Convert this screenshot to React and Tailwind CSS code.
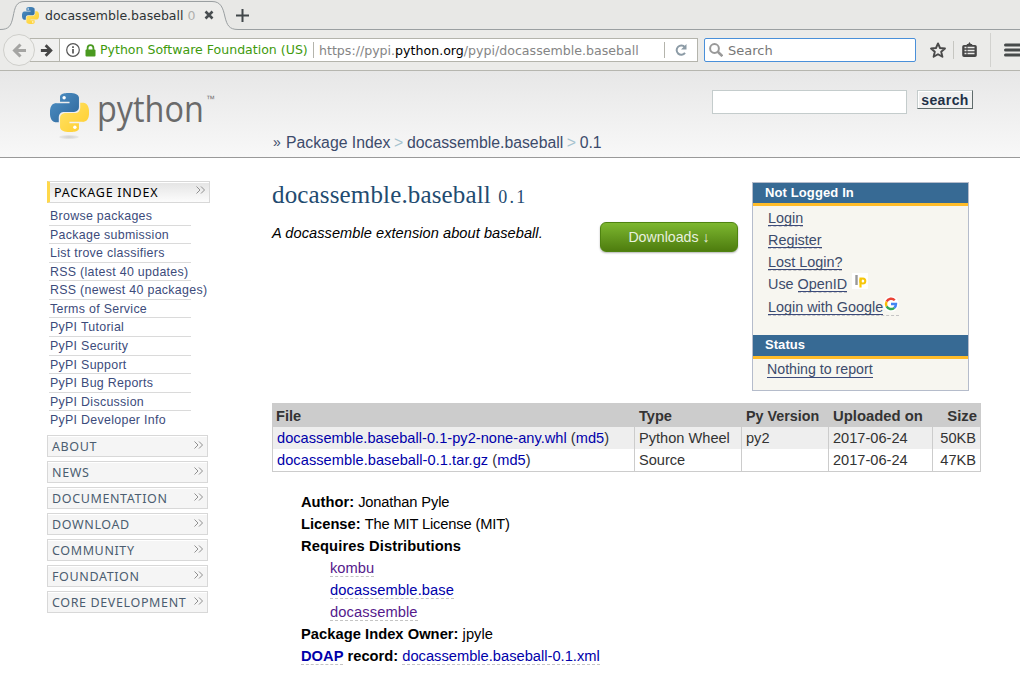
const LOBE =
  "M14.25.18l.9.2.73.26.59.3.45.32.34.34.25.34.16.33.1.3.04.26.02.2-.01.13V8.5l-.05.63-.13.55-.21.46-.26.38-.3.31-.33.25-.35.19-.35.14-.33.1-.3.07-.26.04-.21.02H8.77l-.69.05-.59.14-.5.22-.41.27-.33.32-.27.35-.2.36-.15.37-.1.35-.07.32-.04.27-.02.21v3.06H3.17l-.21-.03-.28-.07-.32-.12-.35-.18-.36-.26-.36-.36-.35-.46-.32-.59-.28-.73-.21-.88-.14-1.05-.05-1.23.06-1.22.16-1.04.24-.87.32-.71.36-.57.4-.44.42-.33.42-.24.4-.16.36-.1.32-.05.24-.01h.16l.06.01h8.16v-.83H6.18l-.01-2.75-.02-.37.05-.34.11-.31.17-.28.25-.26.31-.23.38-.2.44-.18.51-.15.58-.12.64-.1.71-.06.77-.04.84-.02 1.27.05z";

function PythonMark({ className, id }) {
  return (
    <svg className={className} viewBox="0 0 24 24">
      <defs>
        <linearGradient id={id + "b"} x1="0" y1="0" x2="1" y2="1">
          <stop offset="0" stopColor="#4f92c6" />
          <stop offset="1" stopColor="#2d659a" />
        </linearGradient>
        <linearGradient id={id + "y"} x1="0" y1="0" x2="1" y2="1">
          <stop offset="0" stopColor="#ffcd2c" />
          <stop offset="1" stopColor="#ffe368" />
        </linearGradient>
      </defs>
      <path d={LOBE} fill={`url(#${id}b)`} />
      <circle cx="8.7" cy="2.9" r="1.05" fill="#fff" />
      <g transform="rotate(180 12 12)">
        <path d={LOBE} fill={`url(#${id}y)`} />
        <circle cx="8.7" cy="2.9" r="1.05" fill="#fff" />
      </g>
    </svg>
  );
}

function TabBar() {
  return (
    <div className="relative h-[30px] shrink-0 bg-[#e8e8e6]">
      <svg className="absolute left-0 top-0" width="1020" height="30" fill="none">
        <path d="M0 29.5C9 29.5 11 26 13 17C15 7 16 1.5 25 1.5H212C221 1.5 223 8 225 17C227 25 229 29.5 238 29.5V30H0z" fill="#ececea" />
        <path d="M0 29.5C9 29.5 11 26 13 17C15 7 16 1.5 25 1.5H212C221 1.5 223 8 225 17C227 25 229 29.5 238 29.5H1020" stroke="#9a9fa1" />
      </svg>
      <div className="relative flex h-[30px] items-center pl-[22px]">
        <PythonMark id="t" className="h-[17px] w-[17px]" />
        <span className="ml-[6px] w-[154px] whitespace-nowrap pt-px font-['DejaVu_Sans'] text-[12.5px] leading-[18px] text-[#2e3436]">
          docassemble.baseball <span className="text-[#b0b0ae]">0</span>
        </span>
        <svg className="ml-[5px]" width="10" height="10" viewBox="0 0 10 10" stroke="#484d50" strokeWidth="2.6">
          <path d="M1.5 1.5l7 7M8.5 1.5l-7 7" />
        </svg>
        <svg className="ml-[22px]" width="13" height="13" viewBox="0 0 13 13" stroke="#41474a" strokeWidth="2">
          <path d="M6.5 0v13M0 6.5h13" />
        </svg>
      </div>
    </div>
  );
}

function Toolbar() {
  return (
    <div className="flex h-[41px] shrink-0 items-center border-b border-[#b6b6af] bg-[#ebebe9] font-['DejaVu_Sans'] text-[12.6px] leading-[18px]">
      <div className="relative z-10 ml-[3px] flex h-8 w-8 items-center justify-center rounded-full border border-[#cfcfcb] bg-[#efefed]">
        <svg width="15" height="15" viewBox="0 0 15 15" fill="none" stroke="#a5a5a3" strokeWidth="3">
          <path d="M14 7.5H3M8.5 1.5l-6 6 6 6" />
        </svg>
      </div>
      <div className="-ml-[5px] flex h-6 w-[668px] items-center border border-l-0 border-[#b4b4ac] bg-white">
        <div className="flex h-full w-[30px] items-center justify-center border-r border-[#b4b4ac] bg-[#f0f0ef]">
          <svg className="ml-1" width="13" height="13" viewBox="0 0 15 15" fill="none" stroke="#464646" strokeWidth="3.2">
            <path d="M1 7.5h11M6.5 1.5l6 6-6 6" />
          </svg>
        </div>
        <svg className="ml-[6px]" width="14" height="14" viewBox="0 0 14 14" fill="none" stroke="#555" strokeWidth="1.2">
          <circle cx="7" cy="7" r="6.3" />
          <path d="M7 6v4.5M7 3.2v1.7" strokeWidth="1.7" />
        </svg>
        <svg className="ml-[5px]" width="11" height="13" viewBox="0 0 11 13">
          <rect x="0.5" y="5.5" width="10" height="7" rx="1" fill="#4a9a20" />
          <path d="M2.6 6V4a2.9 2.9 0 0 1 5.8 0v2" fill="none" stroke="#4a9a20" strokeWidth="1.8" />
        </svg>
        <span className="ml-[4px] w-[208px] whitespace-nowrap text-[12.550px] text-[#409a0c]">Python Software Foundation (US)</span>
        <span className="ml-[5px] h-4 w-px bg-[#b4b4ac]" />
        <span className="ml-[5px] w-[345px] whitespace-nowrap pt-px text-[#858585]">
          https://pypi.<span className="text-black">python.org</span>/pypi/docassemble.baseball
        </span>
        <span className="h-4 w-px bg-[#b4b4ac]" />
        <svg className="ml-[10px]" width="12" height="12" viewBox="0 0 12 12" fill="none">
          <path d="M9.8 3.2A4.6 4.6 0 1 0 10 8.8" stroke="#8c9ba6" strokeWidth="2" />
          <path d="M11.5 0v5.5H6z" fill="#8c9ba6" />
        </svg>
      </div>
      <div className="ml-[6px] flex h-6 w-[212px] items-center rounded-[2px] border border-[#4a90d9] bg-white">
        <svg className="ml-[4px]" width="14" height="14" viewBox="0 0 14 14" fill="none" stroke="#999" strokeWidth="2">
          <circle cx="5.5" cy="5.5" r="4.4" />
          <path d="M8.8 8.8l4.6 4.4" strokeWidth="2.6" />
        </svg>
        <span className="ml-[5px] pt-px text-[13px] text-[#777]">Search</span>
      </div>
      <svg className="ml-[14px]" width="16" height="16" viewBox="0 0 16 16" fill="none" stroke="#4a4a4a" strokeWidth="1.9" strokeLinejoin="round">
        <path d="M8 1.4l2 4.6 5 .5-3.8 3.3 1.2 5L8 12.2l-4.4 2.6 1.2-5L1 6.5 6 6z" />
      </svg>
      <span className="ml-[7px] h-[18px] w-px bg-[#c6c6c1]" />
      <svg className="-mt-px ml-[8px]" width="15" height="15" viewBox="0 0 15 15">
        <path d="M5 2h1.2L7.5 0l1.3 2H10l.4 1H13a1.8 1.8 0 0 1 1.8 1.8v8.4A1.8 1.8 0 0 1 13 15H2a1.8 1.8 0 0 1-1.8-1.8V4.8A1.8 1.8 0 0 1 2 3h2.6z" fill="#464646" />
        <path d="M2.5 5.5h2M5.500 5.500h7M2.500 8.500h2M5.500 8.500h7M2.500 11.500h2M5.500 11.500h7" stroke="#ebebe9" strokeWidth="1.5" />
      </svg>
      <span className="ml-[13px] h-[34px] w-px bg-[#d2d2cf]" />
      <svg className="ml-[13px]" width="16" height="14" viewBox="0 0 16 14" stroke="#464a4a" strokeWidth="3" strokeLinecap="round">
        <path d="M1.500 2H18M1.500 7H18M1.500 12H18" />
      </svg>
    </div>
  );
}

function SiteHeader() {
  return (
    <header className="flex h-[87px] shrink-0 border-b border-[#999] bg-linear-to-b from-[#e7e7e7] to-[#f8f8f8]">
      <div className="w-[272px] pl-[50px] pt-[22px]">
        <div className="flex h-[40px]">
          <PythonMark id="l" className="h-[39px] w-[39px] shrink-0" />
          <span className="-mt-[4px] ml-[8px] w-[107px] origin-left scale-x-[.9] whitespace-nowrap font-['Open_Sans'] text-[36px] leading-[40px] text-[#6a6a6a]">
            python
          </span>
          <span className="ml-[2px] mt-[2px] font-['Liberation_Sans'] text-[9px] leading-[9px] text-[#777]">™</span>
        </div>
        <div className="ml-[9px] mt-[2px] h-[4px] w-[20px] rounded-[50%] bg-radial from-[#cfcfcf] to-transparent" />
      </div>
      <div className="flex w-[440px] items-end pb-[3px] pl-px text-[15.8px] leading-[22px] text-[#3c4b6b]">
        <span className="w-[13px] text-[14px] leading-[23px]">»</span>
        <span className="whitespace-nowrap">
          Package Index <span className="mx-[-0.8px] text-[#a5c3cf]">&gt;</span> docassemble.baseball{" "}
          <span className="mx-[-0.8px] text-[#a5c3cf]">&gt;</span> 0.1
        </span>
      </div>
      <div className="flex items-start pt-[19px]">
        <div className="h-6 w-[195px] border border-[#c4cccc] bg-white" />
        <button className="ml-[10px] h-[19px] w-[56px] border border-[#c4cccc] border-b-[#5f6b6b] border-r-[#5f6b6b] bg-[#f0f0f0] pt-px text-center text-[14px] font-bold leading-[16px] tracking-[.4px] text-[#223047] shadow-[inset_1px_1px_0_#fff]">
          search
        </button>
      </div>
    </header>
  );
}

function Chevrons() {
  return (
    <svg width="9" height="8" viewBox="0 0 9 8" fill="none" stroke="#858585" strokeWidth="0.9">
      <path d="M.5.5L4 4 .5 7.500M5 .5L8.500 4 5 7.500" />
    </svg>
  );
}

const LINKS = [
  "Browse packages",
  "Package submission",
  "List trove classifiers",
  "RSS (latest 40 updates)",
  "RSS (newest 40 packages)",
  "Terms of Service",
  "PyPI Tutorial",
  "PyPI Security",
  "PyPI Support",
  "PyPI Bug Reports",
  "PyPI Discussion",
  "PyPI Developer Info",
];
const SECTIONS = ["ABOUT", "NEWS", "DOCUMENTATION", "DOWNLOAD", "COMMUNITY", "FOUNDATION", "CORE DEVELOPMENT"];

function Sidebar() {
  return (
    <nav className="ml-[47px] w-[225px] shrink-0 pt-[23px]">
      <div className="flex h-[22px] w-[163px] justify-between border border-l-[3px] border-[#d8d8d8] border-l-[#ffd84a] bg-linear-to-b from-[#e4e4e4] to-[#fcfcfc] pl-[4px] pr-[4px] shadow-[inset_0_1px_0_#fff]">
        <span className="font-['Noto_Sans'] text-[12.5px] leading-[21px] tracking-[.75px] text-black">PACKAGE INDEX</span>
        <span className="pt-[4px] leading-none"><Chevrons /></span>
      </div>
      <ul className="ml-[2px] mt-[4px] w-[142px]">
        {LINKS.map((t) => (
          <li
            key={t}
            className="h-[18.57px] whitespace-nowrap border-b border-[#dadada] pl-px text-[12.4px] leading-[18px] tracking-[.3px] text-[#3c4b7b] last:border-0"
          >
            {t}
          </li>
        ))}
      </ul>
      <div className="mt-[5px] flex flex-col gap-[4px]">
        {SECTIONS.map((t) => (
          <div key={t} className="flex h-[22px] w-[161px] justify-between border border-[#d8d8d8] bg-[#f5f5f5] pl-[4px] pr-[4px] shadow-[inset_0_1px_0_#fff]">
            <span className="whitespace-nowrap font-['Noto_Sans'] text-[12.5px] leading-[22px] tracking-[.63px] text-[#4b5d70]">{t}</span>
            <span className="pt-[5px] leading-none"><Chevrons /></span>
          </div>
        ))}
      </div>
    </nav>
  );
}

function BoxLink({ children }) {
  return (
    <a className="inline-block h-[17px] border-b border-dashed border-[#c4c4c4] leading-[17px]">
      <span className="inline-block h-[16px] border-b border-[#3c4b7b]">{children}</span>
    </a>
  );
}

function LoginBox() {
  return (
    <aside className="h-[209px] w-[217px] border border-[#b5bccb] bg-[#f7f6f0] text-[14.4px] text-[#3c4b6b]">
      <h4 className="h-[23px] border-b-[3px] border-[#ffbc29] bg-[#376a94] pl-[12px] text-[13px] font-bold leading-[20px] tracking-[.12px] text-white">
        Not Logged In
      </h4>
      <ul className="h-[129px] pl-[15px] pt-[4px] leading-[22px]">
        <li className="flex h-[22px]"><BoxLink>Login</BoxLink></li>
        <li className="flex h-[22px]"><BoxLink>Register</BoxLink></li>
        <li className="flex h-[22px]"><BoxLink>Lost Login?</BoxLink></li>
        <li className="flex h-[23px]">
          <span className="mr-[4px] leading-[17px]">Use</span>
          <BoxLink>OpenID</BoxLink>
          <svg className="-mt-[3px] ml-[5px]" width="16" height="16" viewBox="0 0 16 16" fill="none">
            <rect width="16" height="16" fill="#fff" />
            <path d="M4.500 2v10" stroke="#999" strokeWidth="2.400" />
            <path d="M8.500 4.500v10" stroke="#fc0" strokeWidth="2.200" />
            <circle cx="10.800" cy="8" r="2.500" stroke="#f5c60c" strokeWidth="2" />
          </svg>
        </li>
        <li className="flex h-[22px]">
          <a className="flex h-[17px] border-b border-dashed border-[#c4c4c4] leading-[17px]">
            <span className="h-[16px] border-b border-[#3c4b7b]">Login with Google</span>
            <svg className="-mt-[3px]" width="16" height="16" viewBox="0 0 16 16" fill="none" strokeWidth="2.400">
              <circle cx="8" cy="8" r="7.800" fill="#fff" />
              <path d="M11.800 4.300A5 5 0 0 0 3.600 5.600" stroke="#ea4335" />
              <path d="M3.600 5.600a5 5 0 0 0 0 4.800" stroke="#fbbc05" />
              <path d="M3.600 10.400a5 5 0 0 0 7.700 1.400" stroke="#34a853" />
              <path d="M11.300 11.800A5 5 0 0 0 13 8H8" stroke="#4285f4" />
            </svg>
          </a>
        </li>
      </ul>
      <h4 className="h-[24px] border-b-[3px] border-[#ffbc29] bg-[#376a94] pl-[12px] text-[13px] font-bold leading-[20px] tracking-[.05px] text-white">
        Status
      </h4>
      <div className="flex pl-[14px] pt-[2px] text-[14.2px]">
        <span className="h-[17px] border-b border-[#3c4b7b] leading-[17px]">Nothing to report</span>
      </div>
    </aside>
  );
}

function FileLink({ name }) {
  return (
    <>
      <a className="text-[#0000aa]">{name}</a> (<a className="text-[#0000aa]">md5</a>)
    </>
  );
}

function FilesTable() {
  const cell = "border-r border-[#ccc] px-[4px]";
  return (
    <table className="mt-[12px] w-[709px] table-fixed border-separate border-spacing-0 text-left text-[14.6px] leading-[22px] text-[#333]">
      <colgroup>
        <col className="w-[363px]" />
        <col className="w-[107px]" />
        <col className="w-[87px]" />
        <col className="w-[104px]" />
        <col className="w-[48px]" />
      </colgroup>
      <thead>
        <tr className="h-6 whitespace-nowrap bg-[#ccc]">
          <th className="pl-[4px] pt-[2px]">File</th>
          <th className="pl-[4px] pt-[2px]">Type</th>
          <th className="pl-[4px] pt-[2px] text-[14.3px]">Py Version</th>
          <th className="pl-[4px] pt-[2px] text-[14.850px]">Uploaded on</th>
          <th className="pr-[4px] pt-[2px] text-right text-[14.850px]">Size</th>
        </tr>
      </thead>
      <tbody>
        <tr className="h-[22px] bg-[#eee]">
          <td className={cell + " border-l tracking-[.03px]"}><FileLink name="docassemble.baseball-0.1-py2-none-any.whl" /></td>
          <td className={cell}>Python Wheel</td>
          <td className={cell}>py2</td>
          <td className={cell}>2017-06-24</td>
          <td className={cell + " text-right"}>50KB</td>
        </tr>
        <tr className="h-[23px]">
          <td className={cell + " border-b border-l tracking-[.06px]"}><FileLink name="docassemble.baseball-0.1.tar.gz" /></td>
          <td className={cell + " border-b"}>Source</td>
          <td className={cell + " border-b"} />
          <td className={cell + " border-b"}>2017-06-24</td>
          <td className={cell + " border-b text-right"}>47KB</td>
        </tr>
      </tbody>
    </table>
  );
}

function Dashed({ children, visited }) {
  return (
    <a className={"inline-block h-[18px] border-b border-dashed border-[#c4c4c4] leading-[18px] " + (visited ? "text-[#551a8b]" : "text-[#0000aa]")}>
      {children}
    </a>
  );
}

function Details() {
  return (
    <ul className="ml-[29px] mt-[19px] text-[14.7px] text-black *:h-[22px] *:leading-[22px]">
      <li><b>Author:</b> <span className="tracking-[-.15px]">Jonathan Pyle</span></li>
      <li><b>License:</b> <span className="tracking-[-.15px]">The MIT License (MIT)</span></li>
      <li><b className="tracking-[.12px]">Requires Distributions</b></li>
      <li className="pl-[29px]"><Dashed visited>kombu</Dashed></li>
      <li className="pl-[29px] tracking-[.1px]"><Dashed>docassemble.base</Dashed></li>
      <li className="pl-[29px] tracking-[.1px]"><Dashed visited>docassemble</Dashed></li>
      <li><b className="tracking-[.04px]">Package Index Owner:</b> jpyle</li>
      <li>
        <b><Dashed>DOAP</Dashed> record:</b> <Dashed>docassemble.baseball-0.1.xml</Dashed>
      </li>
    </ul>
  );
}

export default function App() {
  return (
    <div className="flex h-[676px] w-[1020px] flex-col overflow-hidden bg-white font-['Liberation_Sans',sans-serif]">
      <TabBar />
      <Toolbar />
      <SiteHeader />
      <div className="flex">
        <Sidebar />
        <main className="w-[709px] pt-[24px]">
          <div className="flex">
            <div className="w-[328px]">
              <h1 className="mt-[-2px] h-[30px] whitespace-nowrap font-['Liberation_Serif'] text-[25px] leading-[30px] tracking-[.15px] text-[#234b70]">
                docassemble.baseball <span className="ml-px text-[18px] tracking-[2.2px]">0.1</span>
              </h1>
              <p className="mt-[12px] whitespace-nowrap text-[14.6px] italic leading-[22px] tracking-[.05px] text-black">
                A docassemble extension about baseball.
              </p>
            </div>
            <button className="mt-[40px] h-[30px] w-[138px] rounded-[6px] border border-[#4f8311] bg-linear-to-b from-[#7db72f] to-[#4e7d0e] text-[14.2px] leading-[28px] text-[#e8f0de] shadow-[0_1px_2px_rgba(0,0,0,.3)]">
              Downloads ↓
            </button>
            <div className="ml-[14px]"><LoginBox /></div>
          </div>
          <FilesTable />
          <Details />
        </main>
      </div>
    </div>
  );
}
